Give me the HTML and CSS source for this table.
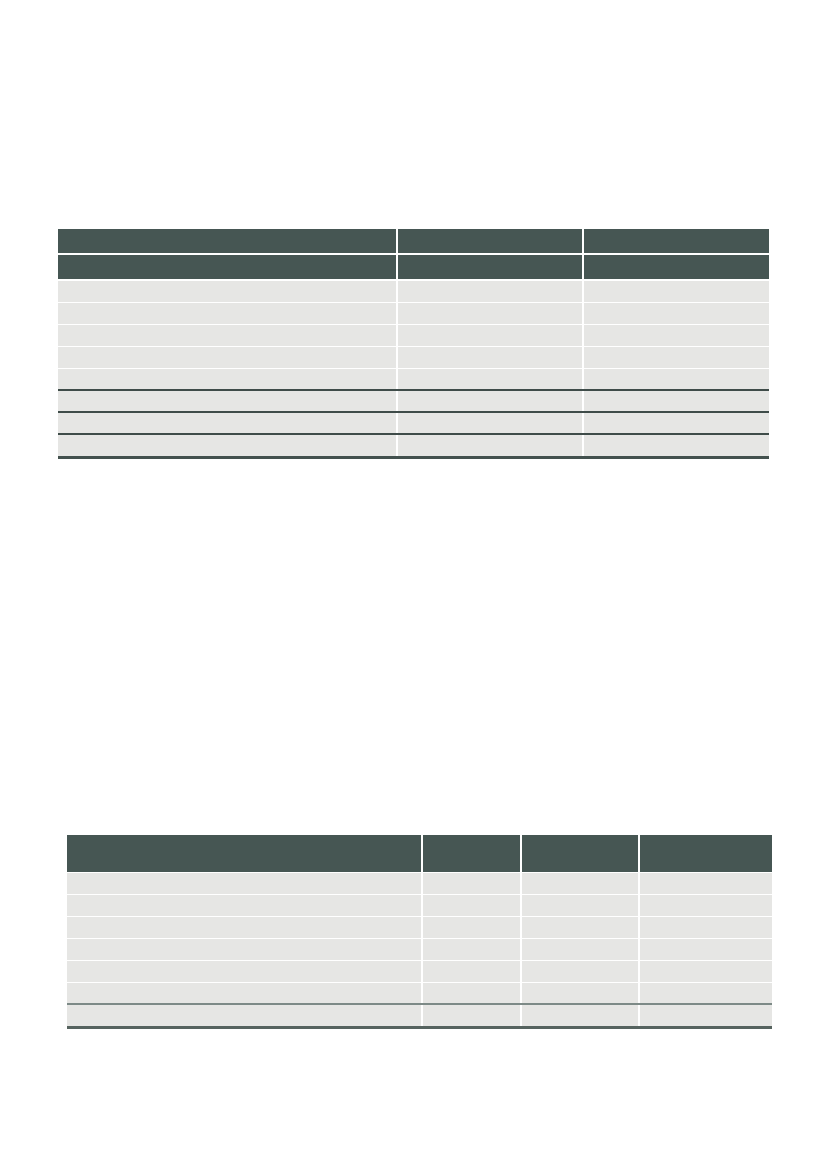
FILE: index.html
```html
<!DOCTYPE html>
<html lang="en">
<head>
<meta charset="utf-8">
<title>Tables</title>
<link rel="stylesheet" href="styles.css">
</head>
<body>
<div class="page">
  <div class="table t1">
    <div class="row head"><div class="cell"></div><div class="cell"></div><div class="cell"></div></div>
    <div class="row head"><div class="cell"></div><div class="cell"></div><div class="cell"></div></div>
    <div class="row body"><div class="cell"></div><div class="cell"></div><div class="cell"></div></div>
    <div class="row body"><div class="cell"></div><div class="cell"></div><div class="cell"></div></div>
    <div class="row body"><div class="cell"></div><div class="cell"></div><div class="cell"></div></div>
    <div class="row body"><div class="cell"></div><div class="cell"></div><div class="cell"></div></div>
    <div class="row body rule"><div class="cell"></div><div class="cell"></div><div class="cell"></div></div>
    <div class="row body rule"><div class="cell"></div><div class="cell"></div><div class="cell"></div></div>
    <div class="row body rule"><div class="cell"></div><div class="cell"></div><div class="cell"></div></div>
    <div class="row body last"><div class="cell"></div><div class="cell"></div><div class="cell"></div></div>
  </div>

  <div class="table t2">
    <div class="row head tall"><div class="cell"></div><div class="cell"></div><div class="cell"></div><div class="cell"></div></div>
    <div class="row body"><div class="cell"></div><div class="cell"></div><div class="cell"></div><div class="cell"></div></div>
    <div class="row body"><div class="cell"></div><div class="cell"></div><div class="cell"></div><div class="cell"></div></div>
    <div class="row body"><div class="cell"></div><div class="cell"></div><div class="cell"></div><div class="cell"></div></div>
    <div class="row body"><div class="cell"></div><div class="cell"></div><div class="cell"></div><div class="cell"></div></div>
    <div class="row body"><div class="cell"></div><div class="cell"></div><div class="cell"></div><div class="cell"></div></div>
    <div class="row body soft"><div class="cell"></div><div class="cell"></div><div class="cell"></div><div class="cell"></div></div>
    <div class="row body last2"><div class="cell"></div><div class="cell"></div><div class="cell"></div><div class="cell"></div></div>
  </div>
</div>
</body>
</html>
```

FILE: styles.css
```css
html, body {
  margin: 0;
  padding: 0;
  background: #ffffff;
  font-family: "Liberation Sans", Arial, sans-serif;
}

.page {
  padding-top: 229px;
  display: flex;
  flex-direction: column;
}

.table {
  display: flex;
  flex-direction: column;
}

.t1 {
  margin-left: 58px;
  width: 711px;
}

.t2 {
  margin-left: 67px;
  margin-top: 376px;
  width: 705px;
}

.row {
  display: grid;
  box-sizing: border-box;
}

.t1 .row {
  grid-template-columns: 340px 186px 185px;
}

.t2 .row {
  grid-template-columns: 356px 99px 118px 132px;
}

.cell {
  box-sizing: border-box;
  border-right: 2px solid #ffffff;
}

.cell:last-child {
  border-right: none;
}

.head {
  height: 26px;
  border-bottom: 2px solid #ffffff;
}

.head .cell {
  background: #465653;
}

.head.tall {
  height: 38px;
  border-bottom: 1px solid #ffffff;
}

.body {
  height: 22px;
  border-bottom: 1px solid #ffffff;
}

.body .cell {
  background: #e6e6e4;
}

.body.rule {
  border-bottom: 2px solid #3f4c49;
}

.body.last {
  height: 24px;
  border-bottom: 3px solid #43514e;
}

.body.soft {
  border-bottom: 2px solid #7d8a87;
}

.body.last2 {
  height: 24px;
  border-bottom: 3px solid #56635f;
}
```
